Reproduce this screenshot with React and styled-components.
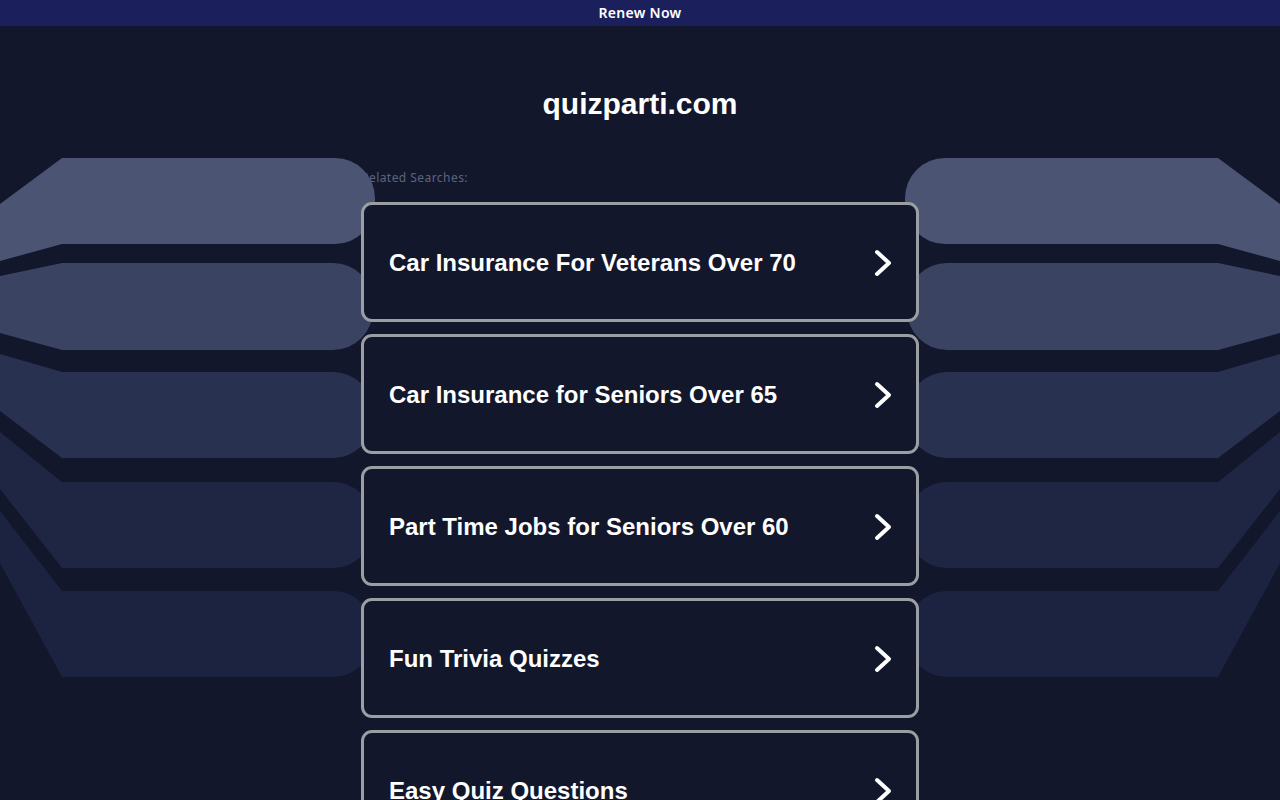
import React from "react";
import styled, { createGlobalStyle } from "styled-components";

const Global = createGlobalStyle`
  html, body { margin: 0; padding: 0; background: #12172b; }
  body { font-family: "Liberation Sans", Arial, sans-serif; }
`;

const Page = styled.div`
  position: relative;
  min-height: 800px;
  background: #12172b;
  overflow: hidden;
`;

const TopBar = styled.a`
  box-sizing: border-box;
  display: flex;
  align-items: center;
  justify-content: center;
  height: 26px;
  padding-bottom: 2px;
  background: #1b1f5c;
  color: #ffffff;
  font-family: "Noto Sans", "Open Sans", sans-serif;
  font-weight: 600;
  font-size: 14px;
  letter-spacing: 0.3px;
  text-decoration: none;
`;

const Decor = styled.svg`
  position: absolute;
  top: 150px;
  ${(p) => (p.$side === "left" ? "left: 0;" : "right: 0;")}
  width: 380px;
  height: 540px;
  z-index: 1;
  pointer-events: none;
`;

const Main = styled.main`
  display: flex;
  flex-direction: column;
  align-items: center;
`;

const Title = styled.h1`
  margin: 60px 0 0;
  height: 36px;
  line-height: 36px;
  font-size: 30px;
  font-weight: 700;
  color: #ffffff;
  font-family: "Liberation Sans", Arial, sans-serif;
`;

const Column = styled.div`
  width: 558px;
  display: flex;
  flex-direction: column;
  margin-top: 48px;
`;

const Label = styled.div`
  position: relative;
  z-index: 0;
  height: 16px;
  line-height: 16px;
  font-family: "Noto Sans", "Open Sans", sans-serif;
  font-size: 12px;
  letter-spacing: 0.45px;
  color: #5d6480;
  margin-bottom: 16px;
`;

const List = styled.div`
  position: relative;
  z-index: 2;
  display: flex;
  flex-direction: column;
  gap: 12px;
`;

const Card = styled.a`
  box-sizing: border-box;
  height: 120px;
  display: flex;
  align-items: center;
  justify-content: space-between;
  padding: 2px 24px 0 25px;
  border: 3px solid #9b9fa4;
  border-radius: 11px;
  background: #12172b;
  color: #ffffff;
  text-decoration: none;
  font-family: "Liberation Sans", Arial, sans-serif;
  font-weight: 700;
  font-size: 24px;
`;

const ChevronIcon = styled.svg`
  flex: none;
  margin-top: -1px;
`;

const Chevron = () => (
  <ChevronIcon width="18" height="28" viewBox="0 0 18 28" fill="none">
    <path
      d="M3 3 L15 14 L3 25"
      stroke="#ffffff"
      strokeWidth="4"
      strokeLinecap="round"
      strokeLinejoin="round"
    />
  </ChevronIcon>
);

// page-coordinate shapes for the left side (y offset 150 applied)
const shapes = [
  { top: 158, bot: 244, lt: 204, lb: 261, r: 375, c: "#4b5472" },
  { top: 263, bot: 350, lt: 276, lb: 333, r: 373, c: "#3a4362" },
  { top: 372, bot: 458, lt: 354, lb: 411, r: 373, c: "#293151" },
  { top: 482, bot: 568, lt: 432, lb: 489, r: 373, c: "#1f2644" },
  { top: 591, bot: 677, lt: 511, lb: 563, r: 373, c: "#1c2341" },
];

const shapePath = (s) => {
  const t = s.top - 150;
  const b = s.bot - 150;
  const lt = s.lt - 150;
  const lb = s.lb - 150;
  const rad = 40;
  return `M0 ${lt} L62 ${t} H${s.r - rad} A${rad} ${rad} 0 0 1 ${s.r} ${t + rad} V${b - rad} A${rad} ${rad} 0 0 1 ${s.r - rad} ${b} H62 L0 ${lb} Z`;
};

const DecorSide = ({ side }) => (
  <Decor $side={side} viewBox="0 0 380 540">
    <g transform={side === "right" ? "translate(380 0) scale(-1 1)" : undefined}>
      {shapes.map((s, i) => (
        <path key={i} d={shapePath(s)} fill={s.c} />
      ))}
    </g>
  </Decor>
);

const items = [
  "Car Insurance For Veterans Over 70",
  "Car Insurance for Seniors Over 65",
  "Part Time Jobs for Seniors Over 60",
  "Fun Trivia Quizzes",
  "Easy Quiz Questions",
];

export default function App() {
  return (
    <Page>
      <Global />
      <TopBar href="#">Renew Now</TopBar>
      <DecorSide side="left" />
      <DecorSide side="right" />
      <Main>
        <Title>quizparti.com</Title>
        <Column>
          <Label>Related Searches:</Label>
          <List>
            {items.map((t) => (
              <Card key={t} href="#">
                <span>{t}</span>
                <Chevron />
              </Card>
            ))}
          </List>
        </Column>
      </Main>
    </Page>
  );
}
